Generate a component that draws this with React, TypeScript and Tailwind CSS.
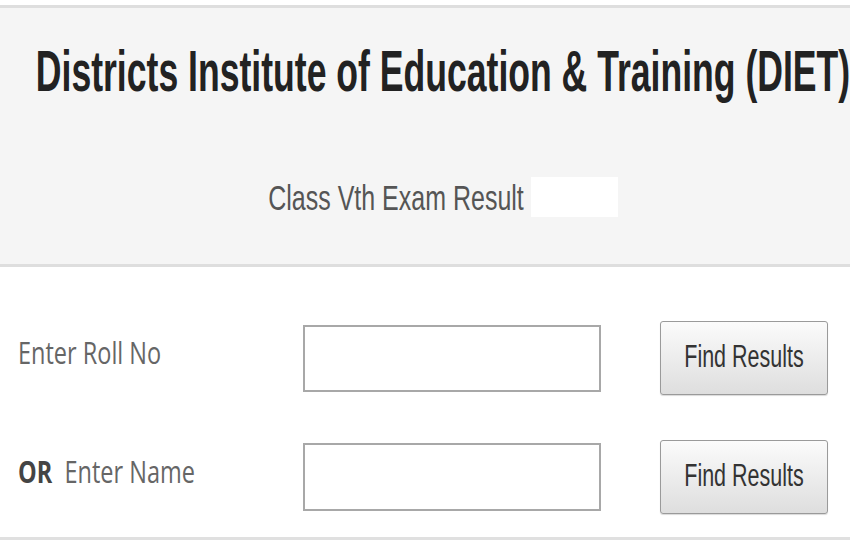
import React from "react";

function FindButton() {
  return (
    <button className="w-[168px] h-[74px] rounded-[3px] border border-[#9a9a9a] bg-gradient-to-b from-[#fbfbfb] to-[#dedede] shadow-[0_1px_1px_rgba(0,0,0,0.15)] flex items-center justify-center">
      <span className="inline-block scale-y-[1.5] text-[21.5px] leading-none text-[#333] [font-family:'Liberation_Sans',Arial,sans-serif]">
        Find Results
      </span>
    </button>
  );
}

export default function App() {
  return (
    <div className="w-[850px] h-[550px] bg-white overflow-hidden flex flex-col">
      <div className="h-[5px] shrink-0" />
      <div className="h-[262px] shrink-0 bg-[#f5f5f5] border-t-[3px] border-b-[3px] border-[#dedede] flex flex-col pl-[36px]">
        <div className="h-[130px] flex items-center justify-center">
          <h1 className="inline-block scale-y-[1.62] text-[35.6px] leading-none font-bold text-[#222] whitespace-nowrap [font-family:'Liberation_Sans',Arial,sans-serif]">
            Districts Institute of Education &amp; Training (DIET)
          </h1>
        </div>
        <div className="h-[118px] flex items-center justify-center gap-[7px]">
          <span className="inline-block scale-y-[1.42] text-[25px] leading-none text-[#555] whitespace-nowrap [font-family:'Liberation_Sans',Arial,sans-serif]">
            Class Vth Exam Result
          </span>
          <div className="w-[87px] h-[40px] bg-white" />
        </div>
      </div>
      <div className="h-[54px] shrink-0" />
      <div className="h-[74px] shrink-0 flex items-center pl-[18px]">
        <div className="w-[285px] -mt-[8px]">
          <span className="inline-block scale-y-[1.32] text-[23.5px] leading-none text-[#666] [font-family:'Open_Sans',sans-serif]">
            Enter Roll No
          </span>
        </div>
        <input className="w-[298px] h-[67px] border-2 border-[#a8a8a8] bg-white outline-none" />
        <div className="ml-[59px]">
          <FindButton />
        </div>
      </div>
      <div className="h-[44px] shrink-0" />
      <div className="h-[75px] shrink-0 flex items-center pl-[18px]">
        <div className="w-[285px] -mt-[8px]">
          <span className="inline-block scale-y-[1.32] text-[23.5px] leading-none text-[#666] whitespace-pre [font-family:'Open_Sans',sans-serif]">
            <b className="text-[#444]">OR</b>{"  "}Enter Name
          </span>
        </div>
        <input className="w-[298px] h-[68px] border-2 border-[#a8a8a8] bg-white outline-none" />
        <div className="ml-[59px]">
          <FindButton />
        </div>
      </div>
      <div className="h-[23px] shrink-0" />
      <div className="h-[3px] shrink-0 bg-[#e0e0e0]" />
    </div>
  );
}
